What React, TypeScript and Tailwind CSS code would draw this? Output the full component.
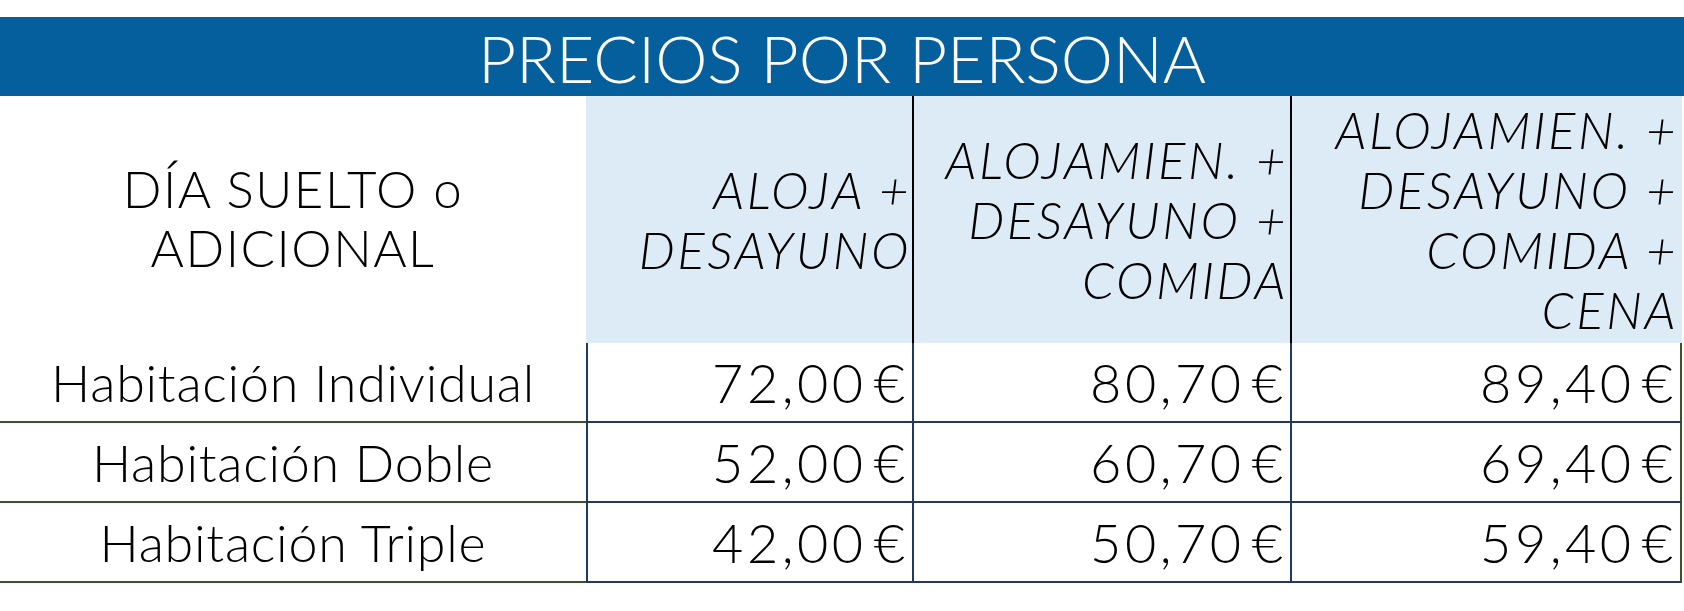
const rows = [
  { label: "Habitación Individual", prices: ["72,00", "80,70", "89,40"] },
  { label: "Habitación Doble", prices: ["52,00", "60,70", "69,40"] },
  { label: "Habitación Triple", prices: ["42,00", "50,70", "59,40"] },
];

const font = { fontFamily: "Lato, 'Open Sans', sans-serif" };

export default function App() {
  return (
    <div className="w-[1684px] h-[611px] bg-white pt-[17px]" style={font}>
      <div className="h-[79px] bg-[#045f9c] flex items-center justify-center">
        <h1 className="text-[66px] leading-none font-light text-white pt-[2px]">
          PRECIOS POR PERSONA
        </h1>
      </div>

      <div className="grid w-[1682px] grid-cols-[586px_326px_378px_392px] text-black">
        {/* header */}
        <div className="h-[247px] flex items-center justify-center text-center text-[51px] leading-[59px] font-light tracking-[1.5px] pb-[4px]">
          <span>
            DÍA SUELTO o
            <br />
            ADICIONAL
          </span>
        </div>
        <div className="h-[247px] bg-[#ddebf7] flex items-center justify-end pr-[1px] text-right text-[51px] leading-[60px] font-light italic tracking-[2.5px]">
          <span>
            ALOJA +
            <br />
            DESAYUNO
          </span>
        </div>
        <div className="h-[247px] bg-[#ddebf7] border-l-2 border-black flex items-center justify-end pr-[2px] text-right text-[51px] leading-[60px] font-light italic tracking-[2.5px]">
          <span>
            ALOJAMIEN. +
            <br />
            DESAYUNO +
            <br />
            COMIDA
          </span>
        </div>
        <div className="h-[247px] bg-[#ddebf7] border-l-2 border-black flex items-center justify-end pr-[4px] text-right text-[51px] leading-[60px] font-light italic tracking-[2.5px]">
          <span>
            ALOJAMIEN. +
            <br />
            DESAYUNO +
            <br />
            COMIDA +
            <br />
            CENA
          </span>
        </div>

        {/* rows */}
        {rows.map((row) => (
          <div key={row.label} className="contents">
            <div className="h-[80px] border-b-2 border-[#375623] flex items-center justify-center text-[52px] font-light tracking-[0.75px]">
              {row.label}
            </div>
            {row.prices.map((p, i) => (
              <div
                key={p}
                className={`h-[80px] border-l-2 border-b-2 border-[#1f3864] flex items-center justify-end gap-[7px] pr-[7px] text-[54px] font-light ${
                  i === 2 ? "border-r-2 border-r-[#375623]" : ""
                }`}
              >
                <span className="tracking-[3.5px]">{p}</span>
                <span>€</span>
              </div>
            ))}
          </div>
        ))}
      </div>
    </div>
  );
}
